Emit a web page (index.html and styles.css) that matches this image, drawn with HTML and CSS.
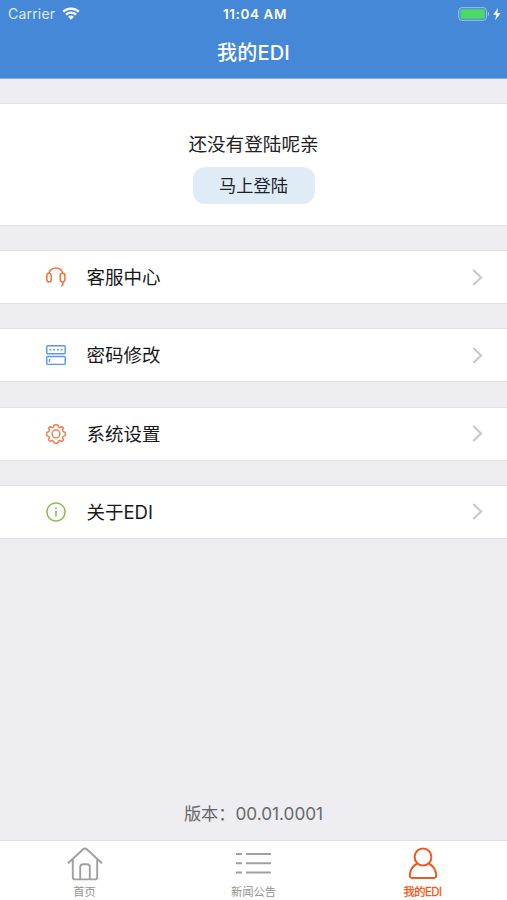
FILE: index.html
```
<!DOCTYPE html>
<html lang="zh-CN">
<head>
<meta charset="utf-8">
<title>我的EDI</title>
<link rel="stylesheet" href="styles.css">
</head>
<body>
<div class="app">
  <header class="header">
    <div class="status">
      <div class="status-left"><span class="carrier">Carrier</span>
        <svg class="wifi" width="18" height="13" viewBox="0 0 18 13" fill="none" stroke="#fff" stroke-width="2.3"><path d="M1.2 4.7C5.6.5 12.4.5 16.8 4.7M4 7.7c2.8-2.7 7.2-2.7 10 0"/><path d="M6.1 9.8c1.6-1.6 4.2-1.6 5.8 0L9 12.7z" fill="#fff" stroke="none"/></svg>
      </div>
      <span class="clock">11:04 AM</span>
      <div class="status-right">
        <svg width="44" height="14" viewBox="0 0 44 14"><rect x=".8" y=".7" width="27.6" height="12.6" rx="3" fill="none" stroke="#9fc3f0" stroke-width="1"/><rect x="2.4" y="2.3" width="24.4" height="9.4" rx="1.3" fill="#4cd964"/><path d="M29.8 4.8c1.7.6 1.7 3.800 0 4.400z" fill="#9fc3f0"/><path d="M40 .9 35.200 7.800h3.200l-1.300 5.400 5.600-7.200h-3.500z" fill="#fff"/></svg>
      </div>
    </div>
    <h1 class="title">我的EDI</h1>
  </header>
  <main class="content">
    <section class="login">
      <p class="login-text">还没有登陆呢亲</p>
      <button class="login-button">马上登陆</button>
    </section>
    <nav class="menu">
      <a class="row">
        <svg class="icon" viewBox="0 0 20 20" fill="none" stroke="#f27035" stroke-width="1.5"><path d="M2.900 6.500C3.800 2.900 6.200 1 9.800 1s6.200 1.900 7 5.500"/><rect x=".9" y="6.300" width="4.300" height="8.600" rx="2.150"/><rect x="14.200" y="6.300" width="4.700" height="8.600" rx="2.300"/><path d="M17.300 14.500c0 2-.5 3.500-1.900 4.600"/></svg>
        <span class="label">客服中心</span>
        <svg class="chevron" viewBox="0 0 10 16"><path d="m1 1 7.400 7L1 15"/></svg>
      </a>
      <a class="row">
        <svg class="icon" viewBox="0 0 20 20" fill="none" stroke="#5a98e2" stroke-width="1.400"><rect x=".8" y=".8" width="18.400" height="8" rx="1"/><rect x=".8" y="11.500" width="18.400" height="7.900" rx="1"/><path d="M3.400 4.800h2M7.100 4.800h2M10.900 4.800h2M14.600 4.800h2M3.500 14v3.200"/></svg>
        <span class="label">密码修改</span>
        <svg class="chevron" viewBox="0 0 10 16"><path d="m1 1 7.400 7L1 15"/></svg>
      </a>
      <a class="row">
        <svg class="icon" viewBox="0 0 20 20" fill="none" stroke="#f18052" stroke-width="1.500" stroke-linejoin="round"><path d="M8.200.9Q10 .4 11.800.9L12.400 2.800 14 3.500 15.800 2.700Q17 3.300 17.400 4.300L16.600 6 17.200 7.600 19.100 8.300Q19.500 10 19.100 11.700L17.200 12.400 16.600 14 17.400 15.800Q16.800 17 15.700 17.400L14 16.500 12.400 17.200 11.800 19.100Q10 19.600 8.200 19.100L7.600 17.200 6 16.500 4.300 17.400Q3.100 16.900 2.600 15.800L3.400 14 2.800 12.400.9 11.700Q.5 10 .9 8.300L2.800 7.600 3.400 6 2.600 4.300Q3.100 3.200 4.200 2.700L6 3.500 7.600 2.800z"/><circle cx="10" cy="10" r="3.900"/></svg>
        <span class="label">系统设置</span>
        <svg class="chevron" viewBox="0 0 10 16"><path d="m1 1 7.400 7L1 15"/></svg>
      </a>
      <a class="row">
        <svg class="icon" viewBox="0 0 20 20" fill="none" stroke="#86bd49" stroke-width="1.500"><circle cx="10" cy="10" r="9.100"/><path d="M10 5.200v1.900M10 8.500v6"/></svg>
        <span class="label">关于EDI</span>
        <svg class="chevron" viewBox="0 0 10 16"><path d="m1 1 7.400 7L1 15"/></svg>
      </a>
    </nav>
    <p class="version">版本：<span class="number">00.01.0001</span></p>
  </main>
  <footer class="tabs">
    <a class="tab">
      <svg width="36" height="34" viewBox="0 0 36 34" fill="none" stroke="#a0a0a0" stroke-width="1.900" stroke-linejoin="round"><path d="M1 16.300 16.200 2.200q1.800-1.500 3.600 0L35 16.300M5.800 12v18.200q0 2.200 2.200 2.200h20q2.200 0 2.200-2.200V12M13.200 32V20q0-2.800 2.800-2.800h4q2.800 0 2.800 2.800v12"/></svg>
      <span>首页</span>
    </a>
    <a class="tab">
      <svg width="36" height="34" viewBox="0 0 36 34" fill="none" stroke="#a0a0a0" stroke-width="2"><path d="M0 7h6M10 7h25M0 16.200h6M10 16.200h25M0 25.500h6M10 25.500h25"/></svg>
      <span>新闻公告</span>
    </a>
    <a class="tab active">
      <svg width="36" height="34" viewBox="0 0 36 34" fill="none" stroke="#ee5a1d" stroke-width="2" stroke-linejoin="round"><circle cx="18" cy="10" r="8.400"/><path d="M12.400 16.500C8.300 18.300 5.400 22.600 4.800 28q-.3 3 2.400 3h21.600q2.700 0 2.400-3c-.6-5.400-3.500-9.700-7.600-11.500"/></svg>
      <span>我的EDI</span>
    </a>
  </footer>
</div>
</body>
</html>
```
FILE: styles.css
```
* { box-sizing: border-box; }
body { margin: 0; font-family: Inter, "Noto Sans CJK SC", sans-serif; }
h1, p { margin: 0; font-weight: 400; }
.app { height: 900px; display: flex; flex-direction: column; background: #eeedf2; }
.header { height: 79px; background: #4688d8; color: #fff; border-bottom: 1px solid #79aeea; }
.status { height: 27px; display: grid; grid-template-columns: 1fr auto 1fr; align-items: center; padding: 0 5px 0 8px; font-size: 14px; }
.status-left { display: flex; align-items: center; gap: 7px; color: #dceafb; }
.carrier { font-size: 14px; letter-spacing: .2px; }
.clock { font-size: 13.500px; font-weight: 600; letter-spacing: .6px; }
.status-right { display: flex; justify-content: flex-end; }
.title { padding-top: 1px; font-size: 20px; line-height: 50px; font-weight: 500; letter-spacing: .2px; text-align: center; }
.content { flex: 1; display: flex; flex-direction: column; padding-top: 24px; }
.login { height: 123px; display: flex; flex-direction: column; align-items: center; padding-top: 26px; background: #fff; border: solid #e4e4e8; border-width: 1px 0; }
.login-text { font-size: 18.600px; line-height: 28px; color: #222; }
.login-button { margin-top: 9px; width: 122px; height: 37px; padding: 0; border: 0; border-radius: 12px; background: #e0ecf5; color: #17222b; font: 17.200px/36px Inter, "Noto Sans CJK SC", sans-serif; }
.menu { display: flex; flex-direction: column; gap: 24.300px; padding-top: 24px; }
.row { height: 54px; display: flex; align-items: center; padding: 0 24px 0 46px; background: #fff; border: solid #e2e2e6; border-width: 1px 0; }
.icon { width: 20px; height: 20px; }
.label { flex: 1; margin-left: 20.500px; font-size: 18.500px; line-height: 28px; color: #181818; }
.chevron { width: 11px; height: 17px; fill: none; stroke: #c7c7cc; stroke-width: 2; }
.version { margin-top: auto; padding-bottom: 13px; text-align: center; font-size: 17.200px; line-height: 26px; color: #68686b; }
.tabs { height: 60px; display: grid; grid-template-columns: repeat(3, 1fr); background: #fff; border-top: 1px solid #e0e0e4; }
.tab { display: flex; flex-direction: column; align-items: center; gap: 2px; padding-top: 6px; font-size: 11.300px; line-height: 18px; color: #929292; }
.active { color: #ee5a1d; letter-spacing: -.5px; -webkit-text-stroke: .3px #ee5a1d; }
```
